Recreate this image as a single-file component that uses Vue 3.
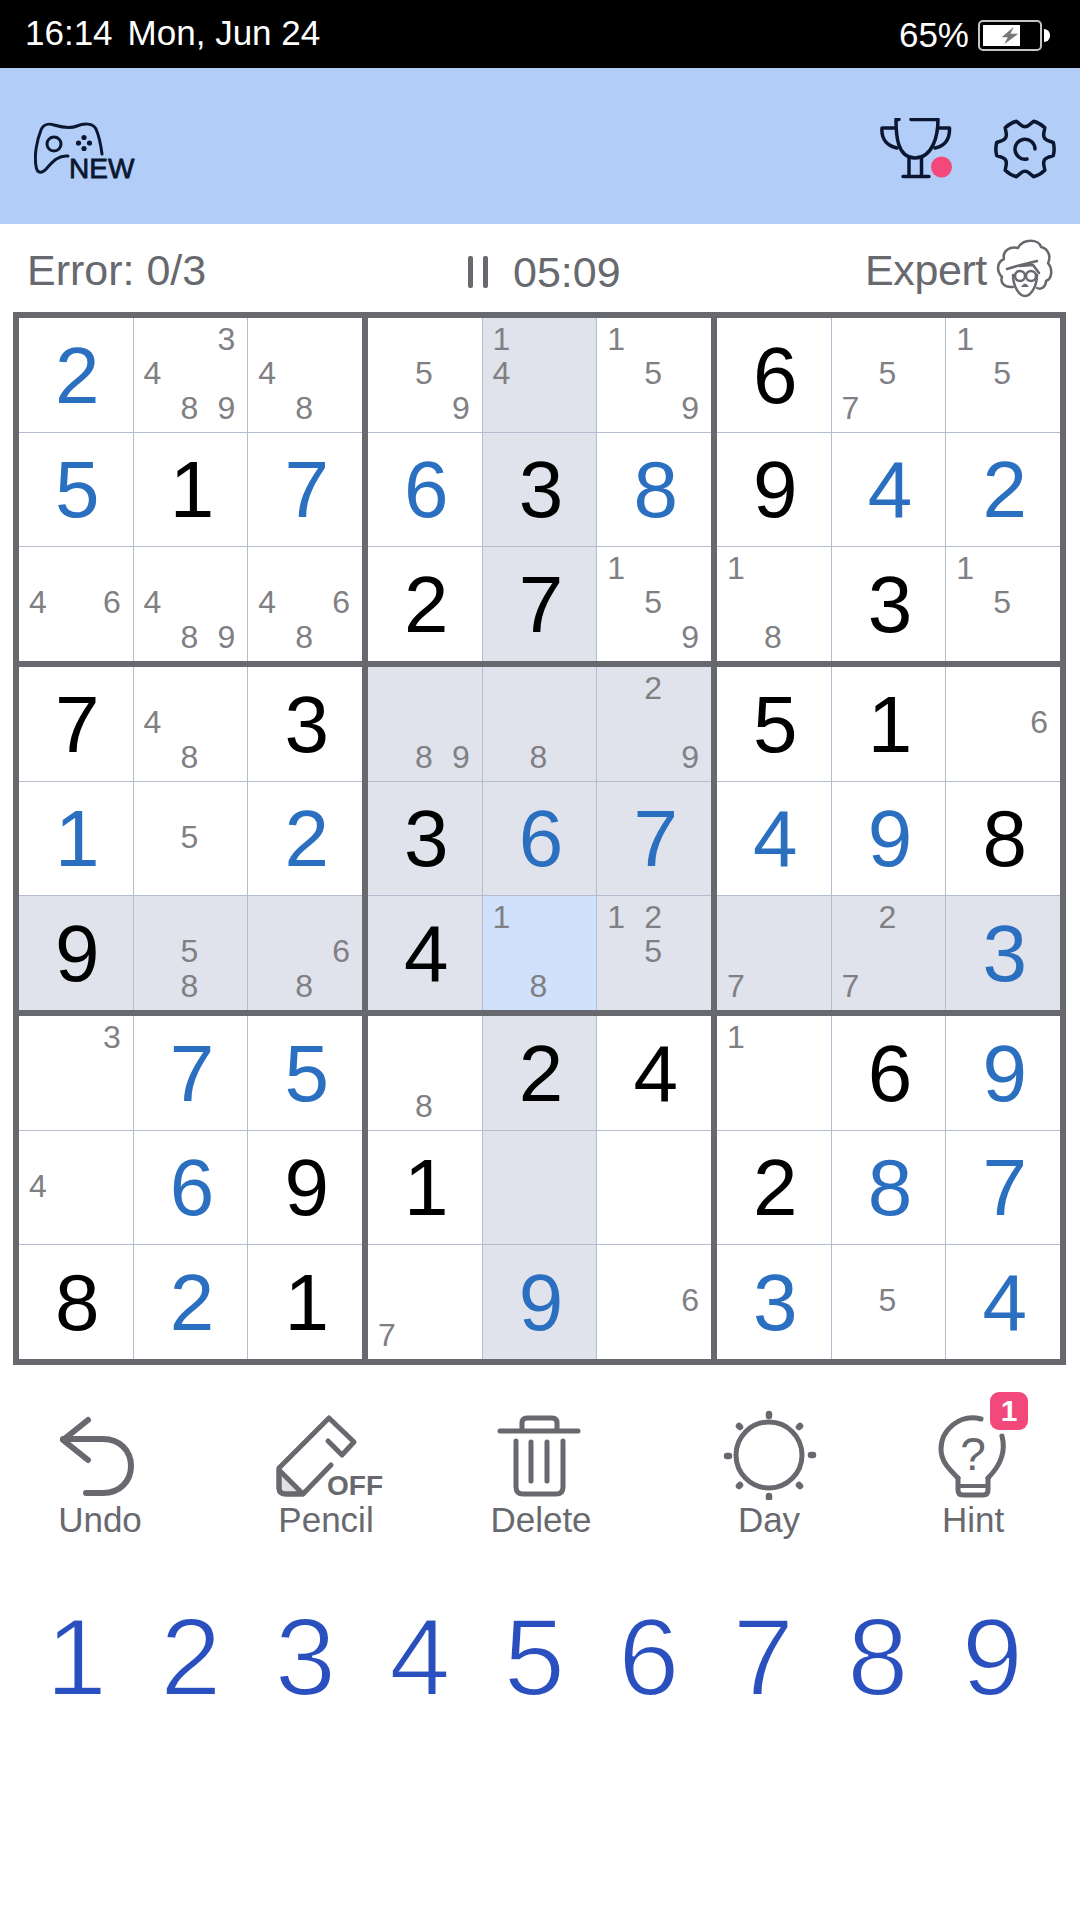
<script setup>
import { computed } from 'vue';

// b = given blue, k = black, anything else is a list of pencil marks
const puzzle = [
  ['b2', '3489', '48', '59', '14', '159', 'k6', '57', '15'],
  ['b5', 'k1', 'b7', 'b6', 'k3', 'b8', 'k9', 'b4', 'b2'],
  ['46', '489', '468', 'k2', 'k7', '159', '18', 'k3', '15'],
  ['k7', '48', 'k3', '89', '8', '29', 'k5', 'k1', '6'],
  ['b1', '5', 'b2', 'k3', 'b6', 'b7', 'b4', 'b9', 'k8'],
  ['k9', '58', '68', 'k4', '18', '125', '7', '27', 'b3'],
  ['3', 'b7', 'b5', '8', 'k2', 'k4', '1', 'k6', 'b9'],
  ['4', 'b6', 'k9', 'k1', '', '', 'k2', 'b8', 'b7'],
  ['k8', 'b2', 'k1', '7', 'b9', '6', 'b3', '5', 'b4'],
];

const selected = { r: 5, c: 4 };

const toCell = (r, c) => {
  const v = puzzle[r][c];
  const isDigit = v[0] === 'b' || v[0] === 'k';
  const inBox = r >= 3 && r <= 5 && c >= 3 && c <= 5;
  return {
    key: `${r}-${c}`,
    digit: isDigit ? v[1] : '',
    tone: v[0] === 'b' ? 'blue' : 'black',
    marks: isDigit ? [] : [1, 2, 3, 4, 5, 6, 7, 8, 9].map((n) => (v.includes(String(n)) ? n : '')),
    active: r === selected.r && c === selected.c,
    lit: c === selected.c || r === selected.r || inBox,
  };
};

const boxes = computed(() => {
  const out = [];
  for (let br = 0; br < 3; br++) {
    for (let bc = 0; bc < 3; bc++) {
      const cells = [];
      for (let r = br * 3; r < br * 3 + 3; r++) {
        for (let c = bc * 3; c < bc * 3 + 3; c++) cells.push(toCell(r, c));
      }
      out.push(cells);
    }
  }
  return out;
});

const polar = (deg, rad) => {
  const t = (deg * Math.PI) / 180;
  return `${(1025 + rad * Math.cos(t)).toFixed(1)} ${(149 + rad * Math.sin(t)).toFixed(1)}`;
};

const gearPath = computed(() => {
  let d = `M${polar(-20, 24.5)} `;
  for (let k = 0; k < 6; k++) {
    const a = k * 60;
    d += `L${polar(a - 13, 29)} Q${polar(a, 30)} ${polar(a + 13, 29)} L${polar(a + 20, 24.5)} Q${polar(a + 30, 20.5)} ${polar(a + 40, 24.5)} `;
  }
  return d + 'Z';
});
</script>

<template>
  <div class="page">
    <div class="status">
      <div class="clock"><span>16:14</span><span>Mon, Jun 24</span></div>
      <div class="power">
        <span>65%</span>
        <div class="battery">
          <div class="charge"></div>
          <svg class="bolt" viewBox="0 0 24 24"><path d="M17 2 L3 14 H10 L6 22 L22 10 H13 Z" fill="#777" /></svg>
        </div>
        <div class="nub"></div>
      </div>
    </div>

    <div class="header">
      <svg class="game" width="104" height="66" viewBox="34 118 104 66">
        <g fill="none" stroke="#0b1730" stroke-width="3" stroke-linecap="round">
          <path d="M68 156 C59 155 53 161 47 168 C42 174 37 174 36 166 C34 155 37 140 41 130 C43 125 48 123 54 125 C61 127 70 129 77 126 C84 123 93 123 96 129 C99 136 101 146 102 154" />
          <circle cx="54" cy="144" r="7" />
        </g>
        <g fill="#0b1730">
          <circle cx="84" cy="137.500" r="2.600" />
          <circle cx="84" cy="148.500" r="2.600" />
          <circle cx="78.500" cy="143" r="2.600" />
          <circle cx="89.500" cy="143" r="2.600" />
        </g>
        <text x="69" y="178" class="new">NEW</text>
      </svg>
      <div class="header-right">
        <svg width="72" height="62" viewBox="880 118 72 62">
          <g fill="none" stroke="#0b1730" stroke-width="3.500" stroke-linecap="round" stroke-linejoin="round">
            <path d="M899 119.500 H896 C896 135 897 158 915 158 C933 158 938 135 938 119.500 H911" />
            <path d="M894 128 H882 C881 140 888 146 897 148" />
            <path d="M938 128 H949.500 C950 140 944 146 935 148" />
            <path d="M909 158 V176 M921.500 158 V176 M903 176.500 H929" />
          </g>
          <circle cx="941.500" cy="167" r="10.500" fill="#f2487a" />
        </svg>
        <svg width="64" height="62" viewBox="992 118 64 62">
          <g fill="none" stroke="#0b1730" stroke-width="3.500" stroke-linecap="round" stroke-linejoin="round">
            <path :d="gearPath" />
            <path d="M1027 159 A10 10 0 1 1 1035 149" />
          </g>
        </svg>
      </div>
    </div>

    <div class="info">
      <div class="label">Error: 0/3</div>
      <div class="timer">
        <span class="pause"><i></i><i></i></span>
        <span>05:09</span>
      </div>
      <div class="level">
        <span class="label expert">Expert</span>
        <svg width="57" height="60" viewBox="997 236 57 60">
          <g fill="none" stroke="#68686f" stroke-width="2.500" stroke-linecap="round" stroke-linejoin="round">
            <path d="M1014 284 C1005 285 1001 279 1003 274 C997 268 998 259 1005 256 C1003 248 1011 243 1019 245 C1024 235 1040 236 1042 244 C1050 246 1052 254 1049 260 C1054 266 1053 276 1047 278 C1047 284 1042 287 1038 285" />
            <path d="M1014 272 C1014 283 1020 293 1026 293 C1032 293 1038 283 1038 272" />
            <path d="M1008 266 L1018 263 L1038 258 M1020 263 L1034 262 L1040 270" />
            <circle cx="1021" cy="273" r="5" />
            <circle cx="1032" cy="273" r="5" />
          </g>
          <path d="M1022 284 Q1026 277 1030 284 Z" fill="#68686f" />
        </svg>
      </div>
    </div>

    <div class="board">
      <div v-for="(cells, i) in boxes" :key="i" class="box">
        <div v-for="cell in cells" :key="cell.key" class="cell" :class="{ lit: cell.lit, active: cell.active }">
          <span v-if="cell.digit" class="digit" :class="cell.tone">{{ cell.digit }}</span>
          <div v-else class="marks">
            <span v-for="(m, j) in cell.marks" :key="j">{{ m }}</span>
          </div>
        </div>
      </div>
    </div>

    <div class="tools">
      <div class="tool">
        <svg width="160" height="92" viewBox="20 1408 160 92">
          <g fill="none" stroke="#68686f" stroke-width="6" stroke-linecap="round" stroke-linejoin="round">
            <path d="M88 1420 L63 1440 L88 1460" />
            <path d="M63 1439 H103 C120 1439 131 1451 131 1466 C131 1481 120 1493 103 1493 H86" />
          </g>
        </svg>
        <span>Undo</span>
      </div>
      <div class="tool">
        <svg width="160" height="92" viewBox="246 1408 160 92">
          <g fill="none" stroke="#68686f" stroke-width="5" stroke-linecap="round" stroke-linejoin="round">
            <path d="M328 1441 L342 1455 L354 1442 L329 1418 L279 1468 V1488 Q279 1494 286 1494 H303 L331 1465" />
            <path d="M279 1470 L303 1494 H286 Q279 1494 279 1488 Z" fill="#68686f" fill-opacity="0.2" />
          </g>
          <text x="327" y="1495" class="off">OFF</text>
        </svg>
        <span>Pencil</span>
      </div>
      <div class="tool">
        <svg width="160" height="92" viewBox="461 1408 160 92">
          <g fill="none" stroke="#68686f" stroke-width="5" stroke-linecap="round" stroke-linejoin="round">
            <path d="M500 1431 H578" />
            <path d="M522 1430 V1423 Q522 1418 527 1418 H552 Q557 1418 557 1423 V1430" />
            <path d="M516 1441 V1487 Q516 1494 523 1494 H556 Q563 1494 563 1487 V1441" />
            <path d="M531 1442 V1481 M547 1442 V1481" />
          </g>
        </svg>
        <span>Delete</span>
      </div>
      <div class="tool">
        <svg width="160" height="92" viewBox="689 1408 160 92">
          <circle cx="769" cy="1455" r="33" fill="none" stroke="#68686f" stroke-width="5" />
          <path d="M769 1414 V1416 M769 1496 V1498 M727 1456 H729 M811 1455 H813 M739 1426 L740 1427 M800 1426 L799 1427 M739 1486 L740 1485 M800 1486 L799 1485" stroke="#68686f" stroke-width="6.500" stroke-linecap="round" fill="none" />
        </svg>
        <span>Day</span>
      </div>
      <div class="tool">
        <svg width="160" height="92" viewBox="893 1408 160 92">
          <g fill="none" stroke="#68686f" stroke-width="5" stroke-linecap="round" stroke-linejoin="round">
            <path d="M981 1419 C960 1413 941 1430 941 1449 C941 1462 950 1470 958 1478" />
            <path d="M1002 1436 C1007 1455 997 1469 988 1478" />
            <path d="M958 1478 V1490 Q958 1495 963 1495 H983 Q988 1495 988 1490 V1478" />
            <path d="M958 1486 H988" stroke-width="4" />
          </g>
          <text x="973" y="1470" class="question">?</text>
        </svg>
        <span class="badge">1</span>
        <span>Hint</span>
      </div>
    </div>

    <div class="numpad">
      <span v-for="n in 9" :key="n">{{ n }}</span>
    </div>
  </div>
</template>

<style scoped>
.page {
  width: 1080px;
  height: 1920px;
  background: #fff;
  font-family: "Liberation Sans", Arial, sans-serif;
  display: flex;
  flex-direction: column;
  overflow: hidden;
}
.status {
  height: 68px;
  flex: none;
  background: #000;
  color: #fff;
  font-size: 35px;
  line-height: 65px;
  display: flex;
  justify-content: space-between;
  padding: 0 30px 0 25px;
  box-sizing: border-box;
}
.clock {
  display: flex;
  gap: 15px;
}
.power {
  display: flex;
  align-items: center;
}
.battery {
  position: relative;
  width: 64px;
  height: 31px;
  margin-left: 9px;
  margin-top: 3px;
  border: 2px solid #c4c4c4;
  border-radius: 5px;
  box-sizing: border-box;
  padding: 3px;
}
.charge {
  width: 37px;
  height: 100%;
  background: #fff;
}
.bolt {
  position: absolute;
  left: 19px;
  top: 3px;
  width: 21px;
  height: 21px;
}
.nub {
  width: 6px;
  height: 13px;
  margin: 3px 0 0 2px;
  background: #fff;
  border-radius: 0 7px 7px 0;
}
.header {
  height: 156px;
  flex: none;
  background: #b2cef8;
  display: flex;
  justify-content: space-between;
  align-items: flex-start;
  padding: 50px 24px 0 34px;
  box-sizing: border-box;
}
.header-right {
  display: flex;
  gap: 40px;
}
.new {
  font-size: 28px;
  fill: #0b1730;
  stroke: #0b1730;
  stroke-width: 0.8px;
}
.info {
  height: 88px;
  flex: none;
  display: grid;
  grid-template-columns: 438px 401px 1fr;
  padding-left: 27px;
  font-size: 43px;
  line-height: 88px;
  color: #68686f;
}
.label {
  padding-top: 2px;
}
.expert {
  letter-spacing: -0.4px;
}
.timer {
  display: flex;
  align-items: center;
  gap: 25px;
  padding-top: 6px;
  line-height: 1;
}
.pause {
  display: flex;
  gap: 10px;
  margin-left: 3px;
}
.pause i {
  width: 5px;
  height: 32px;
  border-radius: 2px;
  background: #68686f;
}
.level {
  display: flex;
  align-items: center;
  gap: 9px;
  margin-left: -1px;
}
.board {
  width: 1053px;
  height: 1053px;
  flex: none;
  margin-left: 13px;
  padding: 6px;
  box-sizing: border-box;
  background: #68686f;
  display: grid;
  grid-template-columns: repeat(3, 343px);
  grid-template-rows: repeat(3, 343px);
  gap: 6px;
}
.box {
  display: grid;
  grid-template-columns: repeat(3, 1fr);
  grid-template-rows: repeat(3, 1fr);
  gap: 1px;
  background: #b4bccf;
}
.cell {
  background: #fff;
  display: flex;
  align-items: center;
  justify-content: center;
  min-width: 0;
}
.cell.lit {
  background: #e0e3ec;
}
.cell.active {
  background: #cfe1fb;
}
.digit {
  font-size: 80px;
  line-height: 1;
  padding: 2px 0 0 3px;
}
.digit.blue {
  color: #2b6fc0;
}
.digit.black {
  color: #000;
}
.marks {
  display: grid;
  grid-template-columns: repeat(3, 37px);
  grid-template-rows: repeat(3, 34.5px);
  margin: -3px 0 0 -2px;
  font-size: 32px;
  line-height: 34.5px;
  text-align: center;
  color: #808084;
}
.tools {
  display: grid;
  grid-template-columns: 226px 215px 228px 204px 160px;
  padding: 43px 0 0 20px;
  flex: none;
}
.tool {
  position: relative;
  width: 160px;
  display: flex;
  flex-direction: column;
  align-items: center;
  font-size: 35px;
  line-height: 40px;
  color: #68686f;
}
.tool svg {
  display: block;
}
.off {
  font-size: 28px;
  font-weight: 700;
  fill: #68686f;
}
.question {
  font-size: 46px;
  text-anchor: middle;
  fill: #68686f;
}
.badge {
  position: absolute;
  left: 97px;
  top: -16px;
  width: 38px;
  height: 38px;
  border-radius: 9px;
  background: #f2487a;
  color: #fff;
  font-size: 30px;
  font-weight: 700;
  line-height: 38px;
  text-align: center;
}
.numpad {
  display: grid;
  grid-template-columns: repeat(9, 114.5px);
  padding-left: 19px;
  margin-top: 62px;
  font-size: 110px;
  line-height: 1;
  text-align: center;
  color: #2a50c0;
  -webkit-text-stroke: 2px #fff;
}
</style>
